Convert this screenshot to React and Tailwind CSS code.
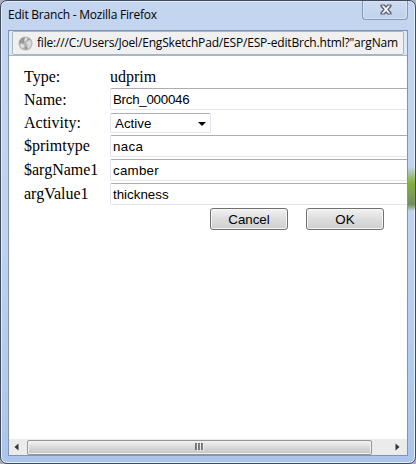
import React from "react";

const serif = "font-['Liberation_Serif',serif]";
const sans = "font-['Liberation_Sans',sans-serif]";
const ui = "font-['Open_Sans','Noto_Sans',sans-serif]";

function Field({ value, tracking = "tracking-normal" }) {
  return (
    <div className={`${sans} ${tracking} flex h-[22px] w-[320px] shrink-0 items-center rounded-[2px] border border-[#e2e5ee] border-t-[#abadb3] bg-white pl-[2px] pt-[2px] text-[13.33px] leading-none text-black`}>
      {value}
    </div>
  );
}

function Row({ label, height, pad = "pt-[2px]", children }) {
  return (
    <div className={`flex items-start ${height}`}>
      <div className={`w-[86px] shrink-0 whitespace-nowrap ${pad}`}>{label}</div>
      {children}
    </div>
  );
}

function Button({ children }) {
  return (
    <button className={`${sans} flex h-[22px] w-[78px] items-center justify-center rounded-[3px] border border-[#707070] bg-linear-to-b from-[#f2f2f2] from-0% via-[#dddddd] via-50% to-[#cfcfcf] pt-px text-[13.33px] leading-none text-black shadow-[inset_0_0_0_1px_#f5f5f5]`}>
      {children}
    </button>
  );
}

function Globe() {
  return (
    <svg width="15" height="15" viewBox="0 0 15 15" className="shrink-0">
      <circle cx="7.5" cy="7.5" r="7" fill="#b4b4b4" />
      <path d="M1.6 4.6 4 2 6.6 1.4 7.4 3 6 4.6 6.4 6.4 4.4 7.2 3 6.8 1.4 8Z" fill="#979797" />
      <path d="M7.4 1.4 9.6 2 8.6 4.2 6.6 5.4 6.4 3.4ZM2 8.6 4.4 8 6.6 9.4 5.6 11.6 4.4 12.4 2.6 10.6Z" fill="#e2e2e2" />
      <path d="M9.4 5.2 12 4 13.4 6.6 13 9.4 10.8 12.4 9.4 10.4 9.6 8.4 8 7.2Z" fill="#dadada" />
      <path d="M10 2.4 12.2 3.4 10.6 4.4 9.4 4.2ZM7 10.4 8.6 10.8 9 13 7 13.4Z" fill="#979797" />
    </svg>
  );
}

function CloseButton() {
  return (
    <div className="flex h-[19px] w-[46px] justify-center rounded-b-[4px] border border-t-0 border-[#8697b3] bg-linear-to-b from-[#cfdcf0] to-[#bed1ec] pl-px pt-[3px] shadow-[inset_0_0_0_1px_#d7e4f6]">
      <svg width="12" height="11" viewBox="0 0 12 11">
        <path d="M1 1H4.2L6 3.1 7.8 1H11V2L8 5.5 11 9V10H7.8L6 7.9 4.2 10H1V9L4 5.5 1 2Z" fill="#f8f8f8" stroke="#555b69" strokeWidth="1.2" strokeLinejoin="round" />
      </svg>
    </div>
  );
}

function Scrollbar() {
  return (
    <div className="flex h-[16px] shrink-0 items-center bg-[#ebebeb]">
      <div className="flex w-[18px] pl-[5px]">
        <svg width="5" height="8" viewBox="0 0 5 8"><path d="M4.5 0.5V7.5L0.5 4Z" fill="#333" /></svg>
      </div>
      <div className="flex h-[15px] w-[345px] items-center justify-center rounded-[2px] border border-[#969696] bg-linear-to-b from-[#f4f4f4] from-0% via-[#d8d8d8] via-50% to-[#c6c6c6] shadow-[inset_0_0_0_1px_#f0f0f0]">
        <svg width="9" height="8" viewBox="0 0 9 8">
          <path d="M1 0V7M4 0V7M7 0V7" stroke="#555" strokeWidth="1.6" />
          <path d="M2.3 1V8M5.3 1V8M8.3 1V8" stroke="#f5f5f5" strokeWidth="0.8" />
        </svg>
      </div>
      <div className="flex flex-1 justify-end pr-[7px]">
        <svg width="5" height="8" viewBox="0 0 5 8"><path d="M0.5 0.5V7.5L4.5 4Z" fill="#333" /></svg>
      </div>
    </div>
  );
}

export default function App() {
  return (
    <div className="h-[464px] w-[416px] overflow-hidden bg-[#a9b0ba]">
      <div className="relative flex h-full w-full flex-col rounded-[7px] border border-[#424b5c] bg-linear-to-b from-[#c3d5ef] via-[#bfd3f1] to-[#abc5ea] px-[7px] pb-[7px] shadow-[inset_0_0_0_1px_#e3eefb]">
        <div className="flex h-[29px] shrink-0 items-start justify-between">
          <div className={`${ui} mt-[5px] whitespace-nowrap text-[12px] leading-[18px] tracking-[-0.22px] text-black`}>Edit Branch - Mozilla Firefox</div>
          <CloseButton />
        </div>
        <div className="flex min-h-0 flex-1 flex-col overflow-hidden border border-[#7f95b5] bg-white">
          <div className="h-[25px] shrink-0 border-b border-[#a5b8cf] bg-[#dce8f6] px-[3px]">
            <div className="flex h-[24px] items-center rounded-[2px] border border-[#a7b6c7] bg-[#f0f0f0] pl-[5px]">
              <Globe />
              <div className={`${ui} ml-[4px] whitespace-nowrap text-[12px] leading-[18px] tracking-[-0.18px] text-black`}>file:///C:/Users/Joel/EngSketchPad/ESP/ESP-editBrch.html?"argNam</div>
            </div>
          </div>
          <div className={`${serif} flex min-h-0 flex-1 flex-col pl-[15px] pt-[10px] text-[16px] leading-[18px] text-black`}>
            <Row label="Type:" height="h-[22px]"><div className="pt-[2px]">udprim</div></Row>
            <Row label="Name:" height="h-[25px]" pad="pt-[3px]"><Field value="Brch_000046" tracking="tracking-[-0.27px]" /></Row>
            <Row label="Activity:" height="h-[22px]" pad="pt-[1px]">
              <div className={`${sans} flex h-[20px] w-[101px] items-center justify-between rounded-[2px] border border-[#e2e5ee] border-t-[#abadb3] bg-white pl-[4px] pr-[4px] pt-px text-[13.33px] leading-none`}>
                Active
                <svg width="8" height="4" viewBox="0 0 8 4"><path d="M0 0H8L4 4Z" fill="#000" /></svg>
              </div>
            </Row>
            <Row label="$primtype" height="h-[24px]"><Field value="naca" tracking="tracking-[0.3px]" /></Row>
            <Row label="$argName1" height="h-[24px]"><Field value="camber" tracking="tracking-[0.25px]" /></Row>
            <Row label="argValue1" height="h-[24px]"><Field value="thickness" /></Row>
            <div className="ml-[186px] mt-px flex gap-[18px]">
              <Button>Cancel</Button>
              <Button>OK</Button>
            </div>
          </div>
          <Scrollbar />
        </div>
        <div className="absolute right-0 top-[166px] h-[44px] w-[7px] bg-linear-to-b from-[#b7cf8a]/0 from-0% via-[#98c93f] via-40% to-[#5e7c3a]/0 to-100%">
          <div className="h-full w-full bg-linear-to-b from-[#a5b83c]/0 from-0% via-[#536f35] via-85% to-[#536f35]/0 to-100% opacity-70" />
        </div>
      </div>
    </div>
  );
}
